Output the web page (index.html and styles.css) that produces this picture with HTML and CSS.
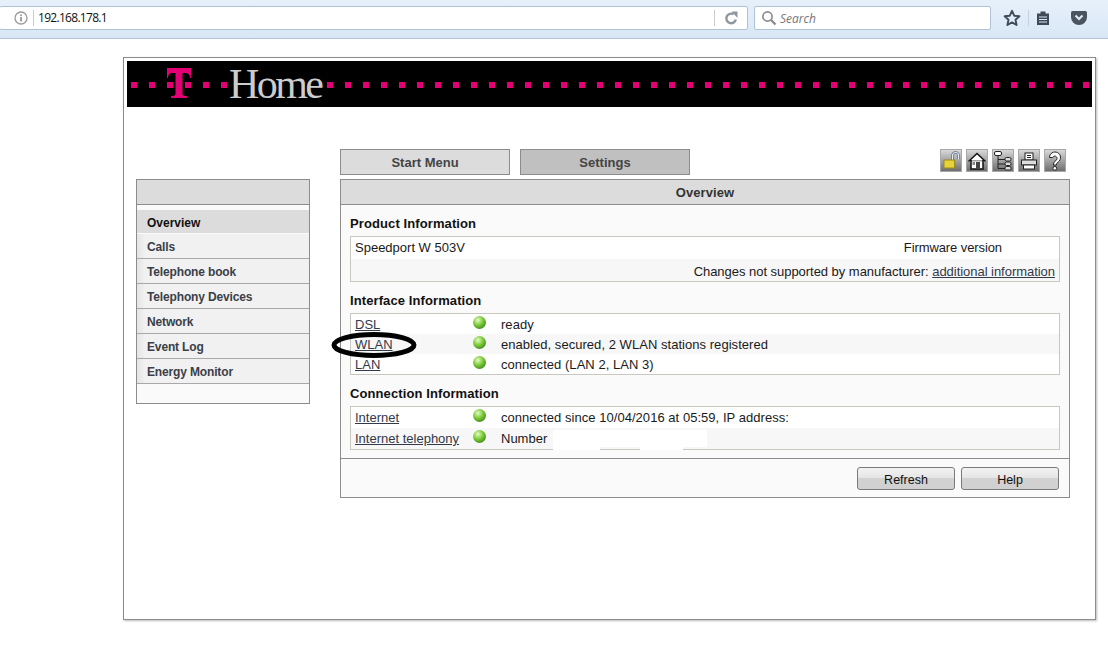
FILE: index.html
```html
<!DOCTYPE html>
<html lang="en">
<head>
<meta charset="utf-8">
<title>192.168.178.1</title>
<link rel="stylesheet" href="styles.css">
</head>
<body>
<header class="chrome">
  <div class="urlbar">
    <svg class="info" width="14" height="14" viewBox="0 0 14 14"><circle cx="7" cy="7" r="6" fill="none" stroke="#9a9a9a" stroke-width="1.3"/><rect x="6.200" y="6" width="1.600" height="4.500" fill="#8a8a8a"/><rect x="6.200" y="3.500" width="1.600" height="1.600" fill="#8a8a8a"/></svg>
    <span class="url">192.168.178.1</span>
    <span class="reload">
      <svg width="14" height="14" viewBox="0 0 14 14"><path d="M11.800 8.500A4.800 4.800 0 1 1 9.600 3.300" fill="none" stroke="#8f979e" stroke-width="2.400"/><path d="M7.500 0.500L13.500 0.500L13.500 7Z" fill="#8f979e"/></svg>
    </span>
  </div>
  <div class="searchbar">
    <svg width="16" height="16" viewBox="0 0 16 16"><circle cx="6.500" cy="6.500" r="4.600" fill="none" stroke="#8d8d8d" stroke-width="1.700"/><path d="M10 10L14.500 14.500" stroke="#8d8d8d" stroke-width="2.400"/></svg>
    <span class="search-text">Search</span>
  </div>
  <div class="tools">
    <svg width="18" height="18" viewBox="0 0 18 18"><path d="M9 1.800L11.200 6.700L16.400 7.300L12.500 10.800L13.600 16L9 13.400L4.400 16L5.500 10.800L1.600 7.300L6.800 6.700Z" fill="none" stroke="#3f4a57" stroke-width="1.900" stroke-linejoin="round"/></svg>
    <span class="sep"></span>
    <svg width="16" height="16" viewBox="0 0 16 16"><path d="M2 3.500H5.500V1.500H10.500V3.500H14V15H2Z" fill="#3f4a57"/><path d="M4 7H12M4 9.500H12M4 12H12" stroke="#d8e6f4" stroke-width="1"/></svg>
    <svg class="pocket" width="18" height="16" viewBox="0 0 18 16"><path d="M2.500 1H15.500Q17 1 17 2.500V7A8 8 0 0 1 1 7V2.500Q1 1 2.500 1Z" fill="#4a5460"/><path d="M5.500 5.500L9 9L12.500 5.500" fill="none" stroke="#dce8f5" stroke-width="2.200"/></svg>
  </div>
</header>

<main class="frame">
  <div class="banner">
    <span class="dots dots-left"></span>
    <svg class="tlogo" width="24" height="30" viewBox="0 0 24 30"><path d="M0 0H24V10H23Q23 5 18 5H15.500V26Q15.500 28 20 28V30H4V28Q8.500 28 8.500 26V5H6Q1 5 1 10H0Z" fill="#e20074"/></svg>
    <span class="home">Home</span>
    <span class="dots dots-rest"></span>
  </div>

  <div class="toprow">
    <nav class="tabs">
      <a class="tab">Start Menu</a>
      <a class="tab tab-active">Settings</a>
    </nav>
    <div class="icons">
      <span class="icon"><svg width="20" height="20" viewBox="0 0 20 20"><path d="M11.500 9V4.500a3 3 0 0 1 6 0V8" fill="none" stroke="#5a6a8a" stroke-width="2.600"/><path d="M11.500 9V4.500a3 3 0 0 1 6 0V8" fill="none" stroke="#e4ecfa" stroke-width="1.200"/><rect x="3" y="9" width="10.500" height="8" fill="#e8d23c" stroke="#9a8a18" stroke-width="1"/></svg></span>
      <span class="icon"><svg width="20" height="20" viewBox="0 0 20 20"><path d="M1.500 10.500L10 2.500L18.500 10.500M4 9V18H16V9" fill="#fff" stroke="#111" stroke-width="1.500"/><rect x="9" y="11" width="4" height="7" fill="#444"/><rect x="5.500" y="11" width="2.500" height="3" fill="#888"/></svg></span>
      <span class="icon"><svg width="20" height="20" viewBox="0 0 20 20"><rect x="1.500" y="0.500" width="7" height="4" rx="1.500" fill="#fff" stroke="#222"/><path d="M5 4.500V17.500H12M5 8.500H12M5 13H12" fill="none" stroke="#222"/><rect x="12" y="6.500" width="6" height="3.500" rx="1.500" fill="#ddd" stroke="#222"/><rect x="12" y="11" width="6" height="3.500" rx="1.500" fill="#ddd" stroke="#222"/><rect x="12" y="15.500" width="6" height="3.500" rx="1.500" fill="#ddd" stroke="#222"/></svg></span>
      <span class="icon"><svg width="20" height="20" viewBox="0 0 20 20"><rect x="6" y="2" width="8" height="7" fill="#fff" stroke="#222"/><path d="M8 4.500H12M8 6.500H12" stroke="#222"/><rect x="2.500" y="9" width="15" height="5" fill="#ddd" stroke="#222"/><rect x="4.500" y="14" width="11" height="4" fill="#fff" stroke="#222"/></svg></span>
      <span class="icon"><svg width="20" height="20" viewBox="0 0 20 20"><path d="M4.500 6.500a5.500 5.500 0 1 1 8.800 4.400q-2 1.500-2 3.100H8.300q0-3 2.700-4.600a2.300 2.300 0 1 0-3.300-2.900Z" fill="#fff" stroke="#222" stroke-width="1"/><circle cx="9.800" cy="17.300" r="1.900" fill="#fff" stroke="#222"/></svg></span>
    </div>
  </div>

  <div class="columns">
    <aside class="sidebar">
      <div class="side-head"></div>
      <ul class="menu">
        <li class="menu-item menu-current">Overview</li>
        <li class="menu-item">Calls</li>
        <li class="menu-item">Telephone book</li>
        <li class="menu-item">Telephony Devices</li>
        <li class="menu-item">Network</li>
        <li class="menu-item">Event Log</li>
        <li class="menu-item">Energy Monitor</li>
      </ul>
    </aside>

    <section class="panel">
      <h1 class="panel-title">Overview</h1>
      <div class="panel-body">
        <h2 class="section-title">Product Information</h2>
        <div class="box">
          <div class="product-row row-first"><span>Speedport W 503V</span><span class="fw">Firmware version</span></div>
          <div class="product-row row-alt row-end"><span>Changes not supported by manufacturer: <a class="link">additional information</a></span></div>
        </div>

        <h2 class="section-title">Interface Information</h2>
        <div class="box">
          <div class="row"><a class="link cell-name">DSL</a><span class="led"></span><span class="status">ready</span></div>
          <div class="row row-alt"><a class="link cell-name">WLAN</a><span class="led"></span><span class="status">enabled, secured, 2 WLAN stations registered</span></div>
          <div class="row"><a class="link cell-name">LAN</a><span class="led"></span><span class="status">connected (LAN 2, LAN 3)</span></div>
          <svg class="ring" width="86" height="28" viewBox="0 0 86 28"><ellipse cx="43" cy="14" rx="40" ry="10.500" fill="none" stroke="#000" stroke-width="5"/></svg>
        </div>

        <h2 class="section-title">Connection Information</h2>
        <div class="box">
          <div class="row row-tall"><a class="link cell-name">Internet</a><span class="led"></span><span class="status">connected since 10/04/2016 at 05:59, IP address:</span></div>
          <div class="row row-tall row-alt"><a class="link cell-name">Internet telephony</a><span class="led"></span><span>Number</span><span class="redact"></span></div>
        </div>
      </div>
      <div class="panel-foot">
        <button class="btn">Refresh</button>
        <button class="btn">Help</button>
      </div>
    </section>
  </div>
</main>
</body>
</html>
```
FILE: styles.css
```css
* { box-sizing: border-box; }
html, body { margin: 0; padding: 0; }
body { background: #fff; font-family: "Liberation Sans", Arial, sans-serif; font-size: 12px; color: #1a1a1a; height: 670px; overflow: hidden; }

.chrome { height: 39px; display: flex; align-items: flex-start; padding-top: 6px; background: linear-gradient(#e6f0fa, #d9e7f6); border-bottom: 1px solid #b4c4d6; }
.urlbar { margin-left: -10px; width: 758px; height: 24px; background: #fff; border: 1px solid #b0c2d6; border-radius: 12px 2px 2px 12px; display: flex; align-items: center; padding-left: 23px; }
.info { flex: none; }
.url { margin-left: 5px; padding-left: 4px; border-left: 1px solid #ccc; line-height: 16px; font-family: "Open Sans", sans-serif; font-size: 12px; letter-spacing: -0.7px; color: #111; }
.reload { margin-left: auto; width: 33px; height: 16px; border-left: 1px solid #ccc; display: flex; align-items: center; justify-content: center; }
.searchbar { margin-left: 6px; width: 237px; height: 24px; background: #fff; border: 1px solid #b0c2d6; border-radius: 2px; display: flex; align-items: center; padding-left: 6px; gap: 3px; }
.search-text { font-family: "Open Sans", sans-serif; font-size: 12px; font-style: italic; color: #777; }
.tools { display: flex; align-items: center; margin-left: 12px; height: 24px; }
.sep { width: 1px; height: 16px; background: #c5d0dc; margin: 0 6px 0 7px; }
.pocket { margin-left: 19px; }

.frame { margin: 18px 0 0 123px; width: 973px; height: 563px; border: 1px solid #8c8c8c; box-shadow: 1px 1px 2px #bbb; padding: 3px; }
.banner { height: 46px; background: #000; display: flex; align-items: center; padding-left: 4px; position: relative; }
.dots { height: 6px; background-image: linear-gradient(90deg, #e20074 6px, transparent 6px); background-size: 18px 6px; background-repeat: repeat-x; flex: none; margin-top: 1px; }
.dots-left { width: 96px; }
.dots-rest { width: 762px; }
.tlogo { position: absolute; left: 40px; top: 7px; }
.home { font-family: "Liberation Serif", serif; font-size: 42px; letter-spacing: -2.6px; line-height: 46px; color: #ccc; width: 100px; padding-left: 2px; flex: none; }

.toprow { display: flex; justify-content: space-between; margin: 42px 0 0 213px; height: 30px; padding-right: 26px; }
.tabs { display: flex; gap: 10px; }
.tab { width: 170px; height: 26px; background: #dcdcdc; border: 1px solid #8c8c8c; font-size: 13px; font-weight: bold; text-align: center; line-height: 26px; color: #444; }
.tab-active { background: #c0c0c0; }
.icons { display: flex; gap: 4px; }
.icon { width: 22px; height: 23px; background: linear-gradient(#d8d8d8, #6e6e6e); border: 1px solid #a8a8a8; display: flex; align-items: center; justify-content: center; }

.columns { display: flex; align-items: flex-start; gap: 30px; margin: 0 0 0 9px; }
.sidebar { width: 174px; height: 225px; border: 1px solid #8c8c8c; background: #fafafa; }
.side-head { height: 25px; background: #dcdcdc; border-bottom: 1px solid #8c8c8c; }
.menu { list-style: none; margin: 5px 0 0; padding: 0; }
.menu-item { height: 25px; padding: 1px 0 0 10px; line-height: 25px; font-weight: bold; letter-spacing: -0.15px; color: #3a3f48; background: linear-gradient(90deg, #e4e4e4, #f1f1f1 8px); border-bottom: 1px solid #a8a8a8; }
.menu-current { height: 23px; background: #dcdcdc; color: #111; border-bottom: 0; margin-bottom: 1px; letter-spacing: 0; }

.panel { width: 730px; height: 319px; border: 1px solid #8c8c8c; background: #fafafa; }
.panel-title { margin: 0; height: 25px; background: #dcdcdc; border-bottom: 1px solid #8c8c8c; font-size: 13px; font-weight: bold; letter-spacing: 0.1px; text-align: center; line-height: 25px; color: #333; }
.panel-body { padding: 0 9px; height: 253px; }
.section-title { margin: 0; font-size: 13px; font-weight: bold; letter-spacing: 0.1px; color: #111; height: 31px; line-height: 38px; }
.box { position: relative; border: 1px solid #c8c8c0; background: #fff; }
.product-row { height: 22px; display: flex; align-items: center; padding: 0 4px; font-size: 13px; }
.row-first { padding-bottom: 2px; }
.fw { margin-left: 439px; letter-spacing: -0.1px; }
.row-end { justify-content: flex-end; padding-top: 2px; letter-spacing: -0.035px; }
.row-alt { background: #f7f7f7; }
.link { color: #333a4a; text-decoration: underline; }
.row { height: 20px; display: flex; align-items: center; padding: 1px 0 0 4px; font-size: 13px; }
.row-tall { height: 21px; padding-top: 0; }
.status { letter-spacing: 0.04px; }
.cell-name { width: 118px; flex: none; }
.led { width: 13px; height: 13px; border-radius: 50%; background: radial-gradient(circle at 38% 32%, #e6fac8 0, #7fce3c 40%, #4f9a20 70%, #5a6a50 100%); flex: none; margin: -5px 15px 0 0; }
.redact { width: 154px; height: 22px; margin-left: 6px; align-self: flex-start; background: linear-gradient(90deg, #fff 47px, transparent 47px, transparent 87px, #fff 87px, #fff 130px, transparent 130px) left bottom / 100% 3px no-repeat, linear-gradient(#fff, #fff) left 2px / 100% 17px no-repeat; }
.ring { position: absolute; left: -20px; top: 17px; }

.panel-foot { height: 39px; border-top: 1px solid #8c8c8c; display: flex; justify-content: flex-end; gap: 6px; padding: 8px 10px 0 0; }
.btn { width: 98px; height: 23px; border: 1px solid #7a7a7a; border-radius: 3px; background: linear-gradient(#f2f2f2, #e6e6e6 45%, #d2d2d2 50%, #d0d0d0); font-family: "Liberation Sans", Arial, sans-serif; font-size: 12.500px; color: #111; padding: 2px 0 0; }
```
